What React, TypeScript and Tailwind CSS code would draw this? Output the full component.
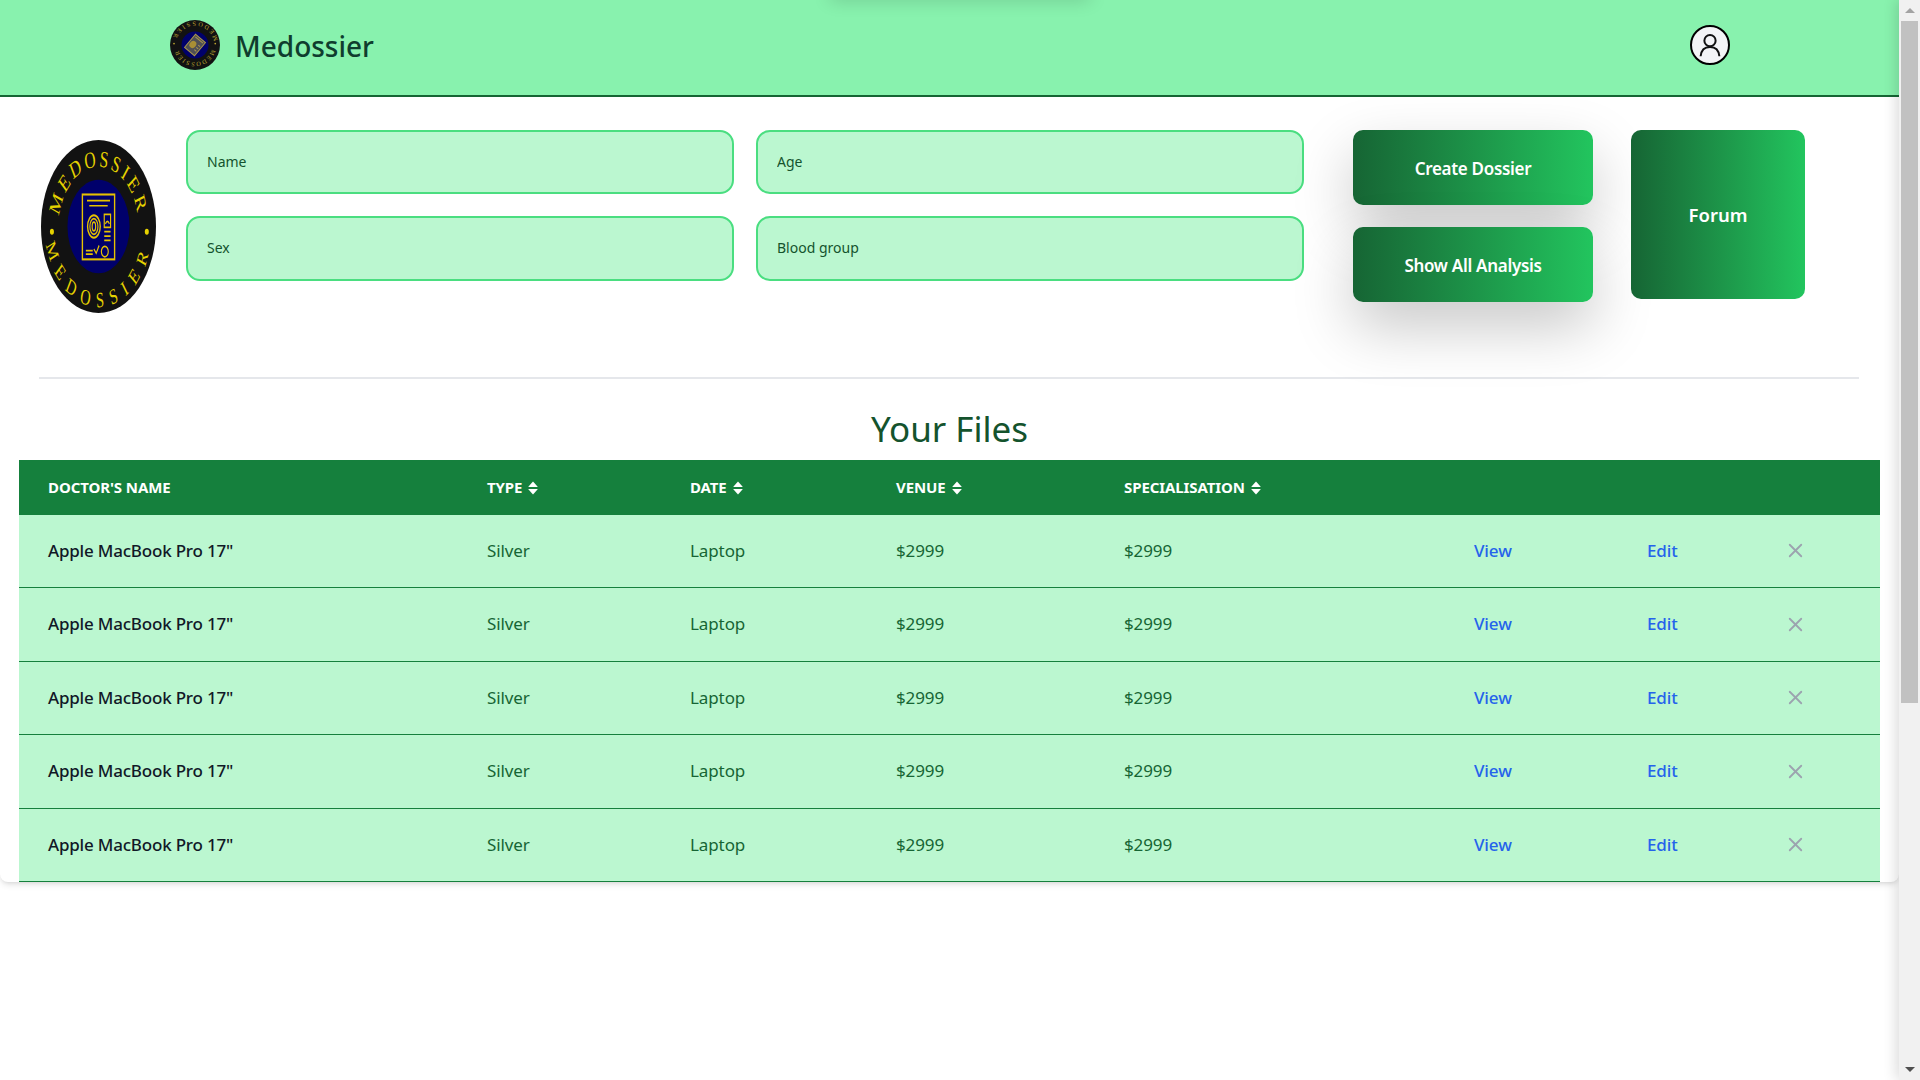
import { X } from "lucide-react";

const font = "[font-family:'Noto_Sans',sans-serif]";

const rows = Array.from({ length: 5 }, (_, i) => i);

const columns = ["TYPE", "DATE", "VENUE", "SPECIALISATION"];

function SortIcon() {
  return (
    <svg className="ml-1.5 inline-block h-[14px] w-[10px] align-[-2px]" viewBox="0 0 10 14" fill="white">
      <path d="M5 0.5 L9.5 5.5 Q9.8 6 9 6 H1 Q0.2 6 0.5 5.5 Z" />
      <path d="M5 13.5 L9.5 8.5 Q9.8 8 9 8 H1 Q0.2 8 0.5 8.5 Z" />
    </svg>
  );
}

function Logo({ className, small }: { className: string; small?: boolean }) {
  const gold = small ? "#b9a230" : "#e6d200";
  return (
    <svg className={className} viewBox="0 0 200 200" preserveAspectRatio="none">
      <defs>
        <path id={small ? "topS" : "topB"} d="M 31 100 A 69 69 0 0 1 169 100" />
        <path id={small ? "botS" : "botB"} d="M 7 100 A 93 93 0 0 0 193 100" />
      </defs>
      <circle cx="100" cy="100" r="100" fill="#121212" />
      <g transform={small ? "rotate(180 100 100)" : undefined}>
        <text fill={gold} fontFamily="'Liberation Serif', serif" fontSize={small ? 25 : 27} textAnchor="middle" letterSpacing="4.500">
          <textPath href={small ? "#topS" : "#topB"} startOffset="50%">
            MEDOSSIER
          </textPath>
        </text>
        <text fill={gold} fontFamily="'Liberation Serif', serif" fontSize="25" textAnchor="middle" letterSpacing="12">
          <textPath href={small ? "#botS" : "#botB"} startOffset="50%">
            MEDOSSIER
          </textPath>
        </text>
        <circle cx="19" cy="106" r="3.500" fill={gold} />
        <circle cx="184" cy="106" r="3.500" fill={gold} />
      </g>
      <circle cx="100" cy="100" r="54" fill="#00006b" />
      {small ? (
        <g transform="rotate(40 100 100)" stroke="#a8954a" fill="none" strokeWidth="4">
          <rect x="74" y="66" width="52" height="68" fill="#4f4f55" />
          <ellipse cx="92" cy="104" rx="13" ry="15" fill="#a88f35" stroke="none" />
          <path d="M80 74 H120 M110 92 H120 M110 104 H120 M110 116 H120" />
        </g>
      ) : (
        <g stroke="#e6c200" fill="none" strokeWidth="2">
          <rect x="72" y="63" width="56" height="75" strokeWidth="2.400" />
          <path d="M80 70 H120 M84 76 H116" />
          <ellipse cx="92" cy="100" rx="11" ry="13" strokeWidth="2.400" />
          <ellipse cx="92" cy="100" rx="7" ry="9" strokeWidth="2" />
          <ellipse cx="92" cy="100" rx="3" ry="5" strokeWidth="2" />
          <rect x="110" y="86" width="11" height="15" />
          <path d="M112 97 Q115.500 91 119 97 M110 106 H121 M110 111 H121 M110 116 H121" />
          <path d="M78 128 H90 M78 132 H90 M92 126 L96 131 L101 122" />
          <ellipse cx="111" cy="129" rx="6" ry="6" />
        </g>
      )}
    </svg>
  );
}

function Field({ label }: { label: string }) {
  return (
    <input
      placeholder={label}
      className={`w-full rounded-[14px] border-2 border-[#4ade80] bg-[#bbf7d0] pb-[2px] pl-[19px] pr-[20px] text-[14px] text-[#14532d] outline-none placeholder:text-[#14532d] ${font}`}
    />
  );
}

export default function App() {
  return (
    <div className={`relative flex h-[1080px] w-[1920px] overflow-hidden bg-white ${font}`}>
      <div className="w-[1899px]">
        <div className="w-[1899px] rounded-b-lg bg-white shadow-md">
          <header className="relative flex h-[97px] w-[1899px] items-center justify-between overflow-hidden border-b-2 border-[#166534] bg-[#88f2ae] pb-[5px] pl-[170px] pr-[169px]">
            <div className="absolute left-[830px] top-[-12px] h-[12px] w-[260px] shadow-[0_0_18px_rgba(0,0,0,0.18)]" />
            <div className="flex items-center gap-[15px]">
              <Logo small className="h-[50px] w-[50px]" />
              <span className="mt-[1px] text-[28px] font-medium leading-none text-[#0f3d2e]">Medossier</span>
            </div>
            <div className="flex h-[40px] w-[40px] items-center justify-center rounded-full border-2 border-black bg-[#f3f4f6]">
              <svg viewBox="0 0 24 24" className="h-[30px] w-[30px]" fill="none" stroke="#111" strokeWidth="1.6">
                <circle cx="12" cy="8.500" r="4.500" />
                <path d="M4.500 21 C5 15.500 8 13.500 12 13.500 C16 13.500 19 15.500 19.500 21" />
              </svg>
            </div>
          </header>

          <section className="flex h-[280px] items-start pl-[41px] pt-[33px]">
            <Logo className="mt-[10px] h-[173px] w-[115px] shrink-0" />
            <div className="ml-[30px] grid w-[1118px] grid-cols-2 grid-rows-[64px_65px] gap-x-[22px] gap-y-[22px]">
              <Field label="Name" />
              <Field label="Age" />
              <Field label="Sex" />
              <Field label="Blood group" />
            </div>
            <div className="ml-[49px] flex w-[240px] flex-col gap-[22px]">
              <button className="h-[75px] rounded-[10px] bg-gradient-to-r from-[#166534] to-[#22c55e] pt-[2px] text-[17px] font-semibold tracking-[-0.3px] text-white shadow-[0_25px_60px_0_rgba(0,0,0,0.22)]">
                Create Dossier
              </button>
              <button className="h-[75px] rounded-[10px] bg-gradient-to-r from-[#166534] to-[#22c55e] pt-[2px] text-[17px] font-semibold tracking-[-0.3px] text-white shadow-[0_25px_60px_0_rgba(0,0,0,0.22)]">
                Show All Analysis
              </button>
            </div>
            <button className="ml-[38px] h-[169px] w-[174px] rounded-[10px] bg-gradient-to-r from-[#166534] to-[#22c55e] text-[18.500px] font-semibold text-white">
              Forum
            </button>
          </section>

          <div className="mx-[39px] h-[2px] w-[1820px] bg-[#e5e7eb]" />

          <h1 className="h-[81px] pt-[25px] text-center text-[35px] leading-[50px] text-[#14532d]">Your Files</h1>

          <table className="ml-[19px] w-[1861px] table-fixed border-collapse text-left">
            <colgroup>
              <col className="w-[439px]" />
              <col className="w-[203px]" />
              <col className="w-[206px]" />
              <col className="w-[228px]" />
              <col className="w-[350px]" />
              <col className="w-[173px]" />
              <col className="w-[140px]" />
              <col />
            </colgroup>
            <thead>
              <tr className="h-[55px] bg-[#15803d] text-[15px] font-bold tracking-[-0.1px] text-white">
                <th className="pl-[29px]">DOCTOR'S NAME</th>
                {columns.map((c) => (
                  <th key={c} className="pl-[29px]">
                    {c}
                    <SortIcon />
                  </th>
                ))}
                <th />
                <th />
                <th />
              </tr>
            </thead>
            <tbody>
              {rows.map((r) => (
                <tr key={r} className="h-[73px] border-b border-[#15803d] bg-[#bbf7d0] text-[17px] tracking-[-0.1px] text-[#166534] first:h-[72px] even:h-[74px]">
                  <td className="pl-[29px] font-medium tracking-[-0.2px] text-[#111827]">Apple MacBook Pro 17"</td>
                  <td className="pl-[29px]">Silver</td>
                  <td className="pl-[29px]">Laptop</td>
                  <td className="pl-[29px]">$2999</td>
                  <td className="pl-[29px]">$2999</td>
                  <td className="pl-[29px] font-medium text-[#2563eb]">View</td>
                  <td className="pl-[29px] font-medium text-[#2563eb]">Edit</td>
                  <td className="pl-[26px]">
                    <X className="h-[23px] w-[23px] text-[#9ca3af]" strokeWidth={1.9} />
                  </td>
                </tr>
              ))}
            </tbody>
          </table>
        </div>
      </div>

      <aside className="relative z-10 flex h-full w-[21px] flex-col items-center bg-[#f1f1f1] pl-[2px] pr-[2px] shadow-[-3px_0_14px_rgba(0,0,0,0.14)]">
        <div className="flex h-[21px] w-full items-center justify-center">
          <div className="h-0 w-0 border-x-[5px] border-b-[5px] border-x-transparent border-b-[#a3a3a3]" />
        </div>
        <div className="h-[682px] w-[17px] bg-[#c1c1c1]" />
        <div className="mt-auto flex h-[21px] w-full items-center justify-center">
          <div className="h-0 w-0 border-x-[5px] border-t-[5px] border-x-transparent border-t-[#505050]" />
        </div>
      </aside>
    </div>
  );
}
